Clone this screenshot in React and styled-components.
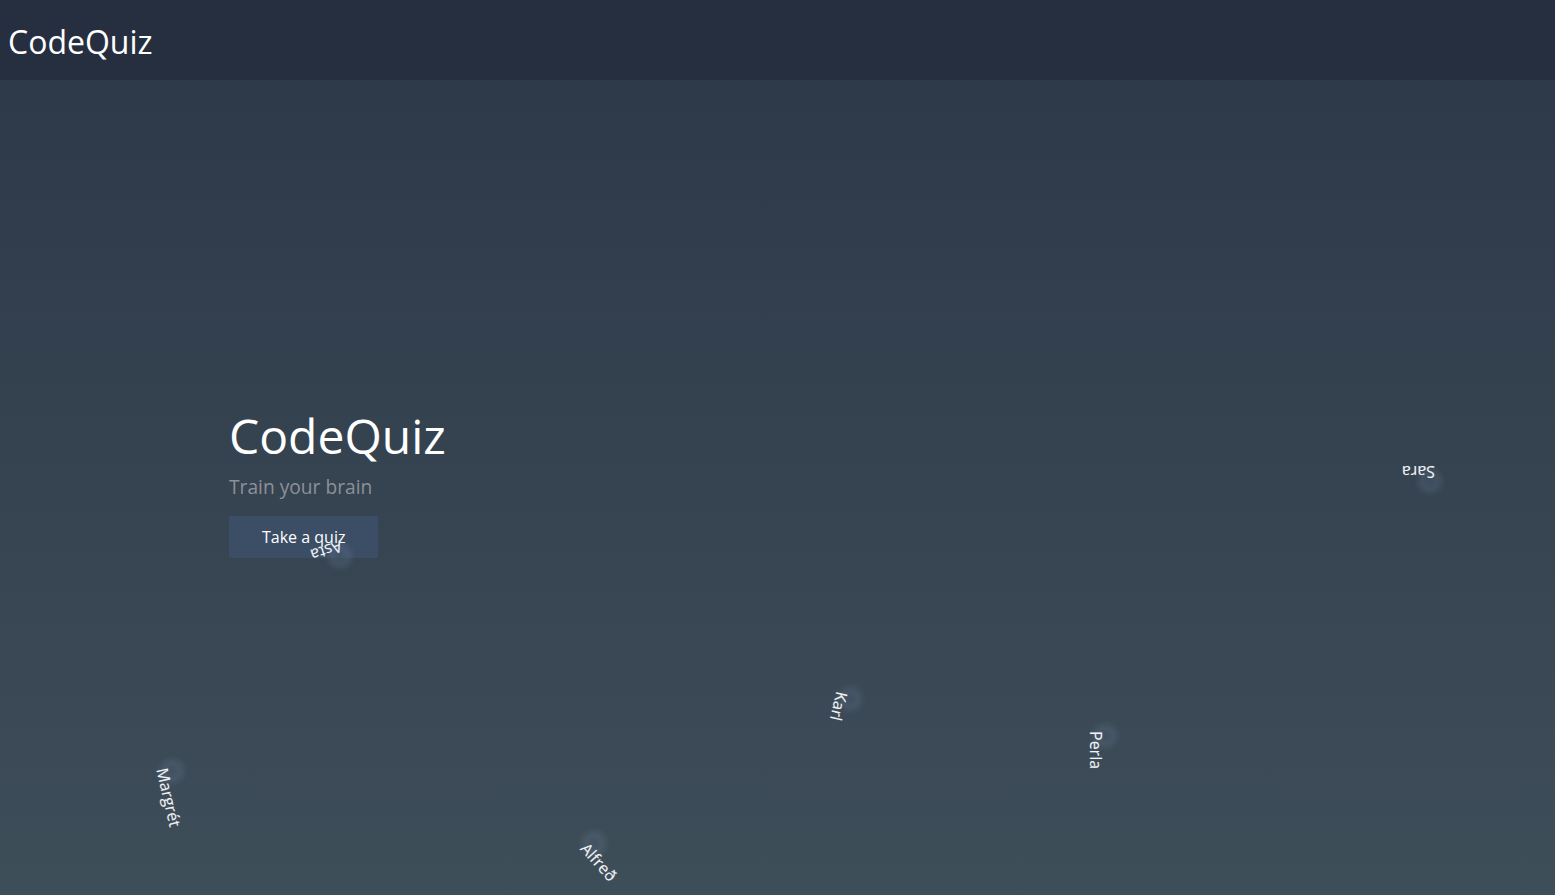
import styled, { createGlobalStyle } from "styled-components";

const GlobalStyle = createGlobalStyle`
  html, body {
    margin: 0;
    padding: 0;
    background: #262f3f;
    font-family: "Open Sans", "Noto Sans", sans-serif;
  }
  * { box-sizing: border-box; }
`;

const names = [
  { name: "Asta", x: 340, y: 556, rot: 162 },
  { name: "Sara", x: 1430, y: 481, rot: 180 },
  { name: "Karl", x: 850, y: 699, rot: 103 },
  { name: "Perla", x: 1105, y: 736, rot: 90 },
  { name: "Margrét", x: 172, y: 771, rot: 77 },
  { name: "Alfreð", x: 594, y: 843, rot: 48 },
];

function App() {
  return (
    <>
      <GlobalStyle />
      <Header>
        <Brand>CodeQuiz</Brand>
      </Header>
      <Main>
        <Hero>
          <Title>CodeQuiz</Title>
          <Subtitle>Train your brain</Subtitle>
          <QuizButton>Take a quiz</QuizButton>
        </Hero>
        {names.map((n) => (
          <Particle key={n.name} style={{ left: n.x, top: n.y - 80, transform: `rotate(${n.rot}deg)` }}>
            <Glow />
            <Label>{n.name}</Label>
          </Particle>
        ))}
      </Main>
    </>
  );
}

const Header = styled.header`
  height: 80px;
  display: flex;
  align-items: center;
  padding: 0 8px;
  background: #262f3f;
`;

const Brand = styled.div`
  color: #ffffff;
  font-size: 32px;
  line-height: 1;
  padding-top: 3px;
`;

const Main = styled.main`
  position: relative;
  min-height: calc(100vh - 80px);
  display: flex;
  align-items: center;
  overflow: hidden;
  background: linear-gradient(to bottom, #2e3949 0%, #3e4e59 100%);
`;

const Hero = styled.section`
  width: 1097px;
  margin: 0 auto;
  padding-bottom: 10px;
  position: relative;
  z-index: 1;
`;

const Title = styled.h1`
  margin: 0;
  color: #ffffff;
  font-size: 48px;
  font-weight: 400;
  line-height: 1.2;
`;

const Subtitle = styled.p`
  margin: 10px 0 18px;
  color: #8c9198;
  font-size: 19.2px;
  line-height: 1.2;
`;

const QuizButton = styled.button`
  display: inline-block;
  height: 42px;
  padding: 0 33px;
  border: none;
  border-radius: 1px;
  background: #3c4d66;
  color: #ffffff;
  font-family: inherit;
  font-size: 16px;
  cursor: pointer;
`;

const Particle = styled.div`
  position: absolute;
  width: 0;
  height: 0;
  transform-origin: 0 0;
  z-index: 2;
  pointer-events: none;
`;

const Glow = styled.span`
  position: absolute;
  left: -16px;
  top: -16px;
  width: 32px;
  height: 32px;
  border-radius: 50%;
  background: radial-gradient(circle, rgba(70, 85, 110, 0.5) 0%, rgba(130, 150, 180, 0.16) 35%, rgba(130, 150, 180, 0) 70%);
`;

const Label = styled.span`
  position: absolute;
  left: -5px;
  top: 0px;
  white-space: nowrap;
  color: #eef1f5;
  font-size: 16px;
  line-height: 19px;
  text-shadow: 0 0 1px rgba(255, 255, 255, 0.35);
`;

export default App;
